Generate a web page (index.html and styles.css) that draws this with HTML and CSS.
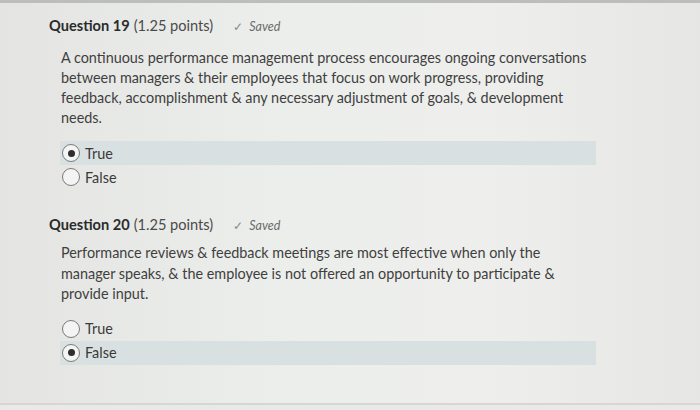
FILE: index.html
```html
<!DOCTYPE html>
<html>
<head>
<meta charset="utf-8">
<link rel="stylesheet" href="styles.css">
</head>
<body>
<div class="page">
  <section class="question q19">
    <div class="qhead">
      <span class="qtitle">Question 19</span>
      <span class="qpoints">(1.25 points)</span>
      <span class="saved"><span class="check">✓</span><span class="savedtxt">Saved</span></span>
    </div>
    <p class="qtext">A continuous performance management process encourages ongoing conversations between managers &amp; their employees that focus on work progress, providing feedback, accomplishment &amp; any necessary adjustment of goals, &amp; development needs.</p>
    <div class="options">
      <div class="opt selected"><span class="radio on"></span><span class="label">True</span></div>
      <div class="opt"><span class="radio"></span><span class="label">False</span></div>
    </div>
  </section>
  <section class="question q20">
    <div class="qhead">
      <span class="qtitle">Question 20</span>
      <span class="qpoints">(1.25 points)</span>
      <span class="saved"><span class="check">✓</span><span class="savedtxt">Saved</span></span>
    </div>
    <p class="qtext">Performance reviews &amp; feedback meetings are most effective when only the manager speaks, &amp; the employee is not offered an opportunity to participate &amp; provide input.</p>
    <div class="options">
      <div class="opt"><span class="radio"></span><span class="label">True</span></div>
      <div class="opt selected"><span class="radio on"></span><span class="label">False</span></div>
    </div>
  </section>
</div>
</body>
</html>
```

FILE: styles.css
```css
html, body {
  margin: 0;
  padding: 0;
}
body {
  width: 700px;
  height: 410px;
  overflow: hidden;
  background: #e9eae8;
  font-family: Lato, "Open Sans", sans-serif;
  color: #3c3c3c;
}
.page {
  height: 405px;
  border-top: 3px solid #bcbebc;
  border-bottom: 2px solid #d6d7d5;
  box-sizing: border-box;
  padding: 13px 0 0 49px;
  background: linear-gradient(90deg, #e4e5e3 0%, #eceeeb 40%, #eeefec 70%, #e6e7e5 100%);
}
.question {
  display: flex;
  flex-direction: column;
}
.q20 {
  margin-top: 26px;
}
.qhead {
  display: flex;
  align-items: baseline;
  height: 20px;
  line-height: 20px;
  font-size: 14.6px;
}
.qtitle {
  font-weight: 700;
  color: #2b2b2b;
}
.qpoints {
  margin-left: 4px;
  color: #4a4a4a;
}
.saved {
  margin-left: 20px;
  font-size: 12.5px;
  font-style: italic;
  color: #6a6a6a;
}
.check {
  font-style: normal;
  font-size: 12px;
  color: #8a8a8a;
  margin-right: 6px;
}
.qtext {
  margin: 12px 0 0 12px;
  width: 532px;
  font-size: 14.4px;
  line-height: 20px;
  color: #3f3f3f;
}
.q20 .qtext {
  margin-top: 8px;
  line-height: 20.5px;
}
.options {
  margin-top: 13px;
  display: flex;
  flex-direction: column;
}
.q20 .options {
  margin-top: 12px;
}
.opt {
  display: flex;
  align-items: center;
  height: 24px;
  width: 536px;
  margin-left: 11px;
  font-size: 14.4px;
}
.opt.selected {
  background: #d9e0e2;
}
.radio {
  width: 16px;
  height: 16px;
  border: 1.5px solid #7a7a7a;
  border-radius: 50%;
  background: #f3f4f3;
  margin-left: 2px;
  display: flex;
  align-items: center;
  justify-content: center;
}
.radio.on::after {
  content: "";
  width: 7px;
  height: 7px;
  border-radius: 50%;
  background: #2e2e2e;
}
.label {
  margin-left: 5px;
  color: #3a3a3a;
}
```
